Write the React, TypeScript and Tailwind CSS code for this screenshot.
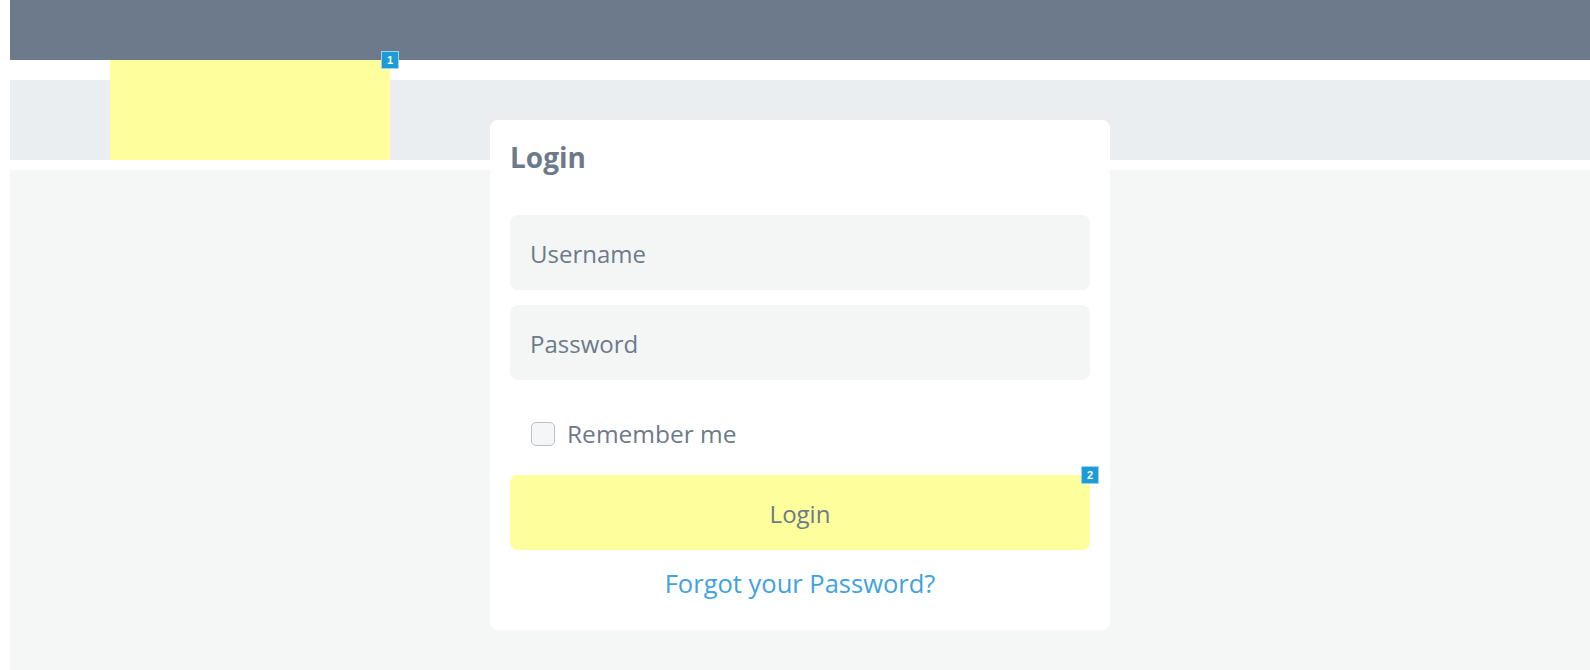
import { useState } from "react";

function Marker({ n }: { n: number }) {
  return (
    <span className="absolute -right-[9px] -top-[9px] z-10 flex h-[18px] w-[18px] items-center justify-center border border-[#9fd3ee] bg-[#1b9bd7] font-['Liberation_Sans',sans-serif] text-[11px] font-bold leading-none text-white">
      {n}
    </span>
  );
}

export default function App() {
  const [username, setUsername] = useState("");
  const [password, setPassword] = useState("");
  const [remember, setRemember] = useState(false);

  return (
    <div className="min-h-[670px] bg-white pl-[10px] font-['Open_Sans',sans-serif] text-[#6c7a8a] flex flex-col">
      {/* top bar */}
      <div className="h-[60px] bg-[#6d7a8b]" />

      {/* logo strip */}
      <div className="relative h-[100px]">
        <div className="mt-[20px] h-[80px] bg-[#ebeef0]" />
        <div className="absolute left-[100px] top-0 h-[100px] w-[280px] bg-[#feff9c]">
          <Marker n={1} />
        </div>
      </div>

      {/* content */}
      <div className="mt-[10px] flex-1 bg-[#f5f6f6] pb-[40px]">
        <div className="relative -mt-[50px] mx-auto w-[620px] rounded-lg bg-white px-5 pt-[20px] pb-[30px]">
          <h1 className="text-[28px] font-bold leading-[34px]">Login</h1>

          <input
            value={username}
            onChange={(e) => setUsername(e.target.value)}
            placeholder="Username"
            className="mt-[41px] block h-[75px] w-full rounded-lg bg-[#f4f6f6] px-5 pt-[2px] text-[24px] outline-none placeholder:text-[#6c7a8a]"
          />
          <input
            type="password"
            value={password}
            onChange={(e) => setPassword(e.target.value)}
            placeholder="Password"
            className="mt-[15px] block h-[75px] w-full rounded-lg bg-[#f4f6f6] px-5 pt-[2px] text-[24px] outline-none placeholder:text-[#6c7a8a]"
          />

          <label className="mt-[37px] flex items-center gap-3 pl-[21px] text-[24.5px] leading-[34px]">
            <span
              onClick={() => setRemember(!remember)}
              className="h-6 w-6 rounded-[5px] border border-[#b9c0c8] bg-[#f4f6f7]"
            >
              {remember && (
                <svg viewBox="0 0 24 24" className="h-full w-full" fill="none" stroke="#6c7a8a" strokeWidth="3">
                  <path d="M5 12l5 5 9-10" />
                </svg>
              )}
            </span>
            Remember me
          </label>

          <div className="relative mt-[24px]">
            <button className="flex h-[75px] w-full items-center justify-center rounded-lg bg-[#feff9c] pt-[2px] text-[24px]">
              Login
            </button>
            <Marker n={2} />
          </div>

          <div className="mt-[16px] text-center text-[25.5px] leading-[34px]">
            <a href="#" className="text-[#41a2df]">
              Forgot your Password?
            </a>
          </div>
        </div>
      </div>
    </div>
  );
}
